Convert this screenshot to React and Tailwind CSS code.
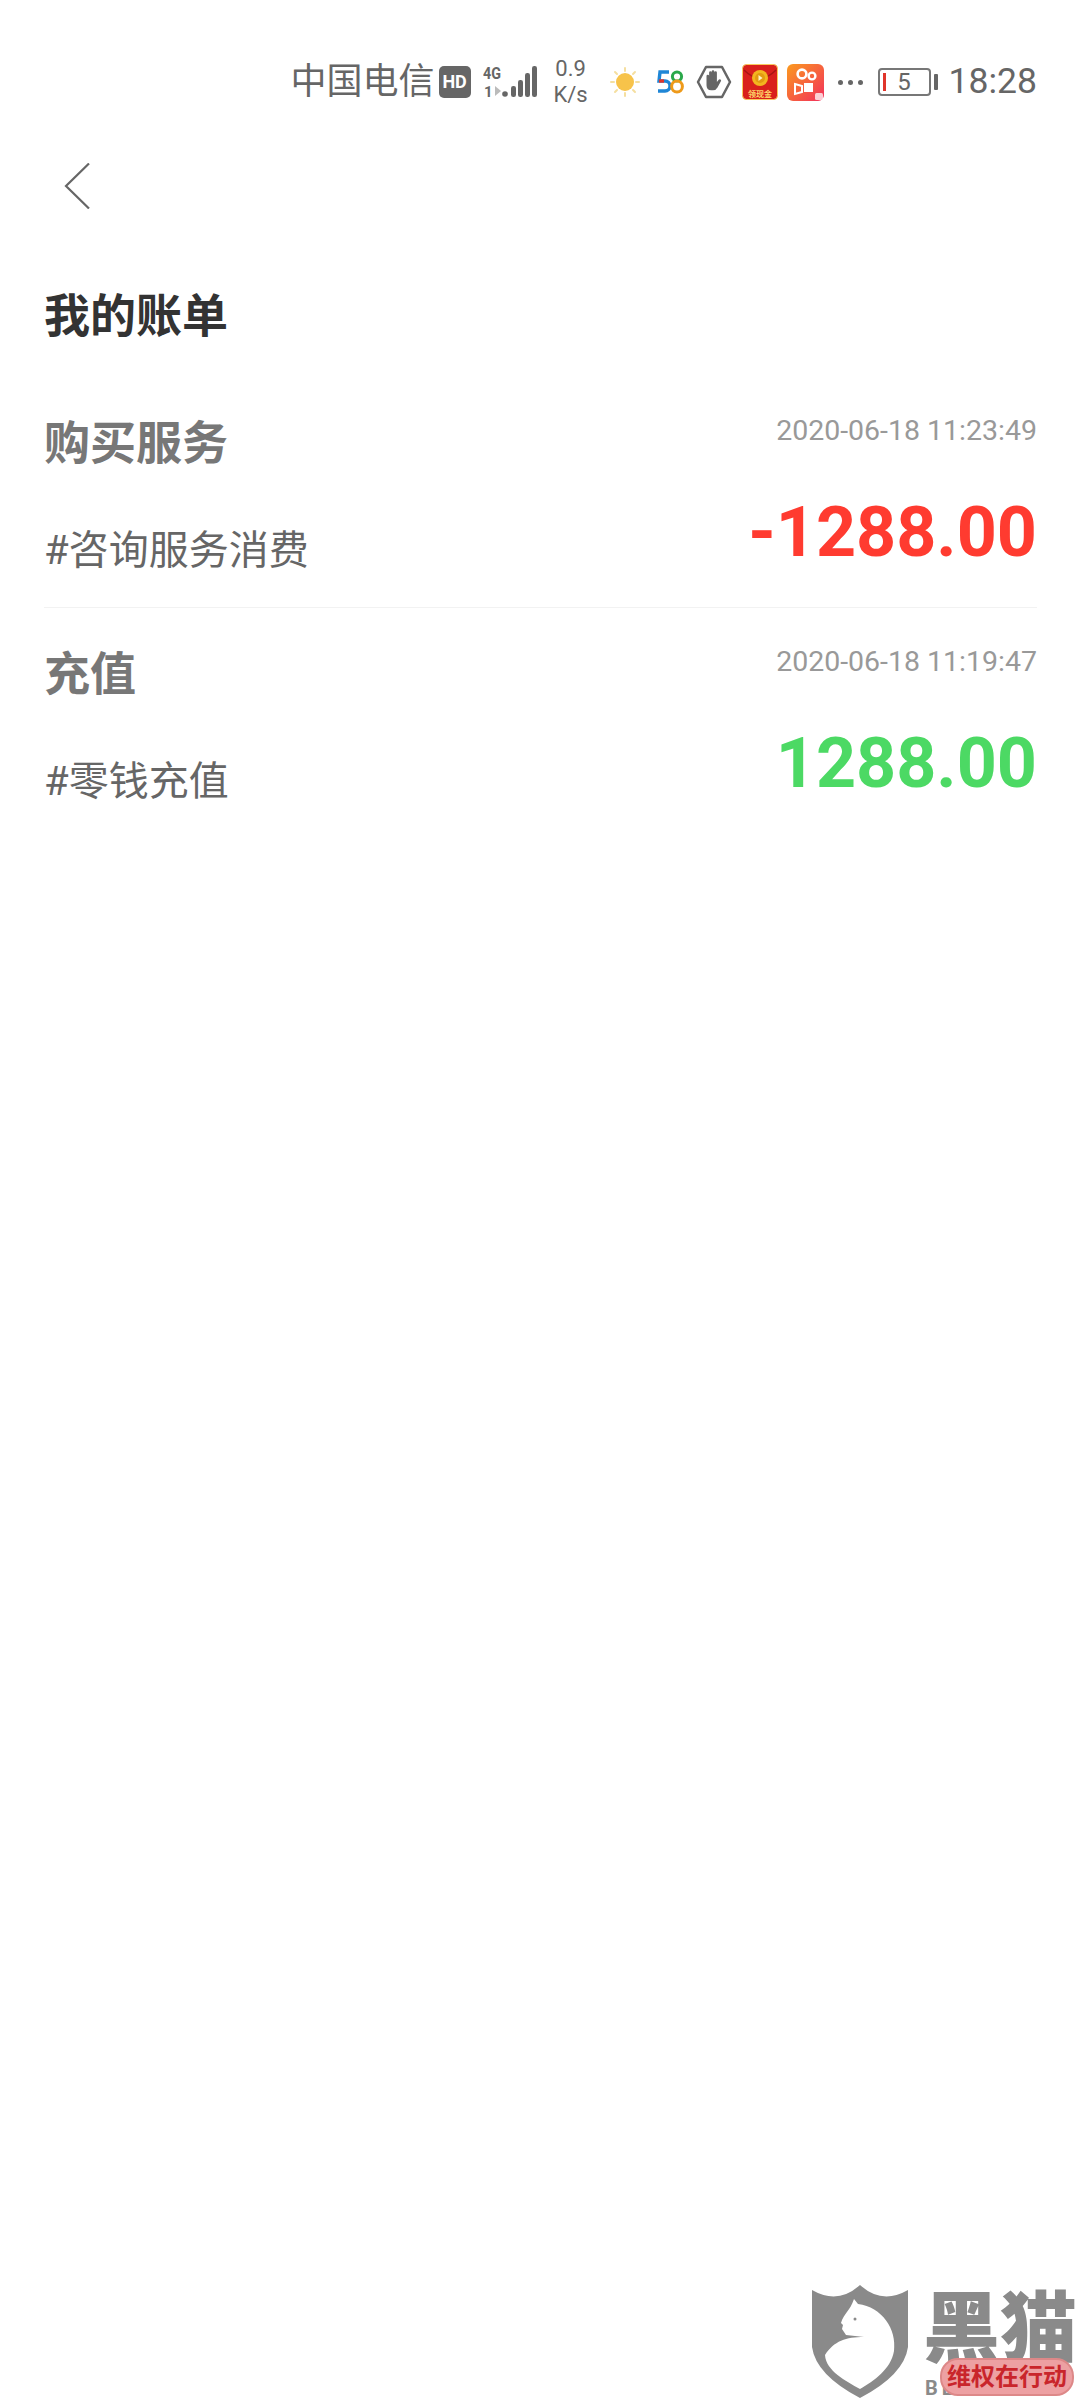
import React from "react";

const bills = [
  { title: "购买服务", time: "2020-06-18 11:23:49", desc: "#咨询服务消费", amount: "-1288.00", color: "text-[#ff3b30]" },
  { title: "充值", time: "2020-06-18 11:19:47", desc: "#零钱充值", amount: "1288.00", color: "text-[#4cd964]" },
];

function Signal() {
  return (
    <svg width="54" height="36" viewBox="0 0 54 36" className="ml-[12px]">
      <text x="0" y="15" fontSize="17" fontWeight="700" fill="#666" fontFamily="Roboto" textLength="18" lengthAdjust="spacingAndGlyphs">4G</text>
      <text x="1" y="33" fontSize="15" fontWeight="700" fill="#666" fontFamily="Roboto">1</text>
      <path d="M12 22l6 5-6 5z" fill="#bbb" />
      <circle cx="22" cy="30" r="2.8" fill="#666" />
      <rect x="28" y="22" width="5" height="11" rx="2.2" fill="#666" />
      <rect x="35" y="16" width="5" height="17" rx="2.2" fill="#666" />
      <rect x="42" y="9" width="5" height="24" rx="2.2" fill="#666" />
      <rect x="49" y="2" width="5" height="31" rx="2.2" fill="#666" />
    </svg>
  );
}

function Sun() {
  return (
    <svg width="30" height="30" viewBox="0 0 30 30" className="ml-[20px]">
      <g stroke="#f5dfa0" strokeWidth="2" strokeLinecap="round">
        <path d="M15 1v3M15 26v3M1 15h3M26 15h3M5 5l2 2M23 23l2 2M5 25l2-2M23 7l2-2" />
      </g>
      <circle cx="15" cy="15" r="9" fill="#f7c34a" />
    </svg>
  );
}

function FiftyEight() {
  return (
    <svg width="28" height="28" viewBox="0 0 28 28" className="ml-[16px]">
      <path d="M13 4H4L3 13H9a4.5 4.5 0 0 1 0 10H2" fill="none" stroke="#1f86d6" strokeWidth="3.4" />
      <path d="M3 13H8" fill="none" stroke="#e0352b" strokeWidth="3.4" />
      <circle cx="21" cy="8.5" r="4.6" fill="none" stroke="#2aa84a" strokeWidth="3" />
      <circle cx="21" cy="18.5" r="5.4" fill="none" stroke="#ee9a1a" strokeWidth="3" />
    </svg>
  );
}

function HandSign() {
  return (
    <svg width="36" height="36" viewBox="0 0 36 36" className="ml-[12px]">
      <path d="M10 3h16l8 15-8 15H10L2 18z" fill="none" stroke="#666" strokeWidth="2.5" strokeLinejoin="round" />
      <path d="M10.5 17v-5a1.3 1.3 0 0 1 2.6 0v4-7.5a1.3 1.3 0 0 1 2.6 0v7.5-8.5a1.3 1.3 0 0 1 2.6 0v8.5-7.5a1.3 1.3 0 0 1 2.6 0v9.5l1.8-2.2a1.3 1.3 0 0 1 2.2 1.4l-3.4 6.4a5 5 0 0 1-4.4 2.7h-2c-3 0-4.6-2-4.6-5z" fill="#666" />
    </svg>
  );
}

function RedPacket() {
  return (
    <svg width="36" height="36" viewBox="0 0 36 36" className="ml-[10px]">
      <rect x="0.5" y="0.5" width="35" height="35" rx="4" fill="#d9201c" stroke="#f9c95c" />
      <path d="M2 6q16 16 32 0" fill="none" stroke="#a81512" strokeWidth="1.5" />
      <circle cx="18" cy="14" r="8" fill="#f3b51f" />
      <circle cx="18" cy="14" r="5" fill="#e39a10" />
      <path d="M16.5 11l4 3-4 3z" fill="#fff3c4" />
      <text x="18" y="33" textAnchor="middle" fontSize="8" fontWeight="700" fill="#ffd76a" fontFamily="Noto Sans CJK SC">领现金</text>
    </svg>
  );
}

function Kwai() {
  return (
    <svg width="37" height="37" viewBox="0 0 37 37" className="ml-[9px]">
      <defs>
        <linearGradient id="kw" x1="0" y1="0" x2="1" y2="1">
          <stop offset="0" stopColor="#fb9a1e" />
          <stop offset="1" stopColor="#f22f5c" />
        </linearGradient>
      </defs>
      <rect width="37" height="37" rx="6" fill="url(#kw)" />
      <circle cx="15" cy="10" r="4.4" fill="none" stroke="#fff" strokeWidth="2.6" />
      <circle cx="25" cy="12" r="3.4" fill="none" stroke="#fff" strokeWidth="2.4" />
      <path d="M8 20l7 2v6l-7 2z" fill="none" stroke="#fff" strokeWidth="2" />
      <path d="M17 19h9v9h-9z" fill="#fff" />
      <rect x="28" y="29" width="8" height="7" rx="1.5" fill="#fff" opacity="0.75" />
    </svg>
  );
}

function Battery() {
  return (
    <div className="ml-[15px] flex items-center gap-[3px]">
      <div className="relative flex h-[28px] w-[53px] items-center justify-center rounded-[4px] border-2 border-[#777] text-[24px] leading-none text-[#666]">
        <span className="absolute left-[3px] top-[3px] h-[18px] w-[3px] bg-[#e0352b]" />
        5
      </div>
      <div className="h-[16px] w-[4px] rounded-[1px] bg-[#666]" />
    </div>
  );
}

function StatusBar() {
  return (
    <div className="mt-[62px] flex h-[40px] items-center justify-end pr-[43px] text-[#666]">
      <span className="text-[36px] leading-none">中国电信</span>
      <span className="ml-[4px] flex h-[32px] w-[32px] items-center justify-center rounded-[5px] bg-[#666] text-[18px] font-bold leading-none text-white">HD</span>
      <Signal />
      <div className="ml-[15px] flex w-[38px] flex-col items-center text-[22px] leading-[26px]">
        <span>0.9</span>
        <span>K/s</span>
      </div>
      <Sun />
      <FiftyEight />
      <HandSign />
      <RedPacket />
      <Kwai />
      <div className="ml-[14px] flex gap-[5px]">
        <span className="h-[5px] w-[5px] rounded-full bg-[#666]" />
        <span className="h-[5px] w-[5px] rounded-full bg-[#666]" />
        <span className="h-[5px] w-[5px] rounded-full bg-[#666]" />
      </div>
      <Battery />
      <span className="ml-[11px] text-[35.5px] leading-none">18:28</span>
    </div>
  );
}

function BillRow({ bill, last }) {
  return (
    <div className={last ? "flex justify-between" : "flex justify-between border-b border-[#f2f2f2]"}>
      <div className="pb-[26px] pt-[36px]">
        <div className="h-[60px] text-[46px] font-bold leading-[60px] text-[#777]">{bill.title}</div>
        <div className="mt-[48px] h-[60px] text-[40px] leading-[60px] text-[#666]">{bill.desc}</div>
      </div>
      <div className="flex flex-col items-end pt-[34px]">
        <div className="h-[40px] text-[28.5px] leading-[40px] text-[#999]">{bill.time}</div>
        <div className={`mt-[39px] h-[84px] text-[70px] font-bold leading-[84px] ${bill.color}`}>{bill.amount}</div>
      </div>
    </div>
  );
}

function Watermark() {
  return (
    <div className="absolute bottom-0 right-0 h-[115px] w-[268px]">
      <svg width="96" height="113" viewBox="0 0 96 113" className="absolute left-0 top-0">
        <path d="M0 5Q26 20 48 0Q70 20 96 5V62Q92 90 48 113Q4 90 0 62Z" fill="#8a8a8a" />
        <path d="M42 14l4 5C70 22 85 44 82 66C79 84 62 96 48 104C34 96 14 86 13 70C22 56 34 52 52 52L34 50L30 44L31 40L29 38C32 28 38 26 42 14Z" fill="#fff" />
        <circle cx="43" cy="34" r="1.5" fill="#8a8a8a" />
      </svg>
      <div className="absolute left-[111px] top-[6px] flex whitespace-nowrap text-[77px] font-black leading-[78px] text-[#8a8a8a]">黑猫</div>
      <div className="absolute left-[113px] top-[92px] whitespace-nowrap text-[20px] font-bold leading-[22px] tracking-[4px] text-[#8a8a8a]">BLACK CAT</div>
      <div className="absolute left-[128px] top-[73px] whitespace-nowrap rounded-[18px] border-2 border-[#d88] bg-[#eda0a2] px-[5px] text-[24px] font-bold leading-[34px] text-[#c9252b]">维权在行动</div>
    </div>
  );
}

export default function App() {
  return (
    <div className="relative h-[2400px] w-[1080px] overflow-hidden bg-white font-[Roboto,'Noto_Sans_CJK_SC',sans-serif]">
      <StatusBar />
      <div className="ml-[64px] mt-[61px] h-[46px] w-[26px]">
        <svg width="26" height="46" viewBox="0 0 26 46">
          <path d="M25 0.5L2 23l23 22.5" fill="none" stroke="#666" strokeWidth="2.2" />
        </svg>
      </div>
      <h1 className="ml-[44px] mt-[77px] h-[60px] text-[46px] font-bold leading-[60px] text-[#333]">我的账单</h1>
      <div className="mx-[43px] mt-[31px] pl-px">
        {bills.map((bill, i) => (
          <BillRow key={bill.time} bill={bill} last={i === bills.length - 1} />
        ))}
      </div>
      <Watermark />
    </div>
  );
}
